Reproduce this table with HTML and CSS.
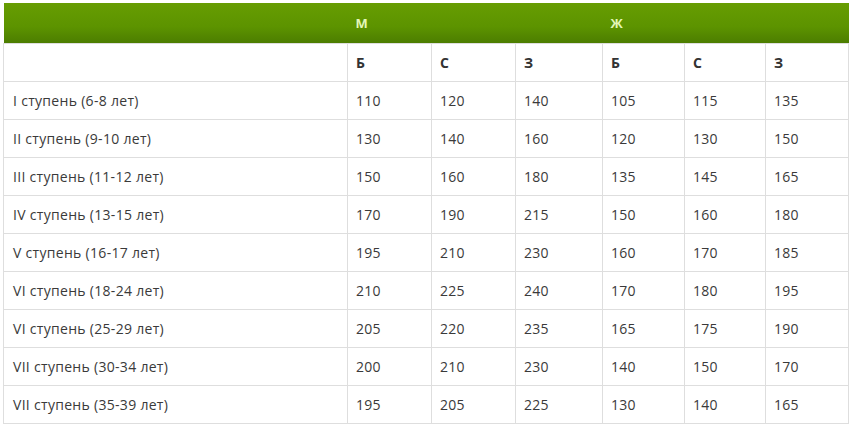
FILE: index.html
```html
<!DOCTYPE html>
<html lang="ru">
<head>
<meta charset="utf-8">
<link rel="stylesheet" href="styles.css">
</head>
<body>
<table class="norms">
  <colgroup>
    <col class="c-name"><col class="c1"><col class="c2"><col class="c3"><col class="c4"><col class="c5"><col class="c6">
  </colgroup>
  <thead>
    <tr class="top">
      <th></th>
      <th colspan="3">М</th>
      <th colspan="3">Ж</th>
    </tr>
  </thead>
  <tbody>
    <tr class="sub"><td></td><td>Б</td><td>С</td><td>З</td><td>Б</td><td>С</td><td>З</td></tr>
    <tr><td>I ступень (6-8 лет)</td><td>110</td><td>120</td><td>140</td><td>105</td><td>115</td><td>135</td></tr>
    <tr><td>II ступень (9-10 лет)</td><td>130</td><td>140</td><td>160</td><td>120</td><td>130</td><td>150</td></tr>
    <tr><td>III ступень (11-12 лет)</td><td>150</td><td>160</td><td>180</td><td>135</td><td>145</td><td>165</td></tr>
    <tr><td>IV ступень (13-15 лет)</td><td>170</td><td>190</td><td>215</td><td>150</td><td>160</td><td>180</td></tr>
    <tr><td>V ступень (16-17 лет)</td><td>195</td><td>210</td><td>230</td><td>160</td><td>170</td><td>185</td></tr>
    <tr><td>VI ступень (18-24 лет)</td><td>210</td><td>225</td><td>240</td><td>170</td><td>180</td><td>195</td></tr>
    <tr><td>VI ступень (25-29 лет)</td><td>205</td><td>220</td><td>235</td><td>165</td><td>175</td><td>190</td></tr>
    <tr><td>VII ступень (30-34 лет)</td><td>200</td><td>210</td><td>230</td><td>140</td><td>150</td><td>170</td></tr>
    <tr><td>VII ступень (35-39 лет)</td><td>195</td><td>205</td><td>225</td><td>130</td><td>140</td><td>165</td></tr>
  </tbody>
</table>
</body>
</html>
```
FILE: styles.css
```css
html, body {
  margin: 0;
  background: #fff;
}
body {
  padding: 3px;
  font-family: "Open Sans", "DejaVu Sans", sans-serif;
  font-size: 14px;
  color: #3a3a3a;
}
.norms {
  border-collapse: collapse;
  table-layout: fixed;
  width: 845px;
}
.c-name { width: 344px; }
.c1 { width: 84px; }
.c2 { width: 84px; }
.c3 { width: 87px; }
.c4 { width: 82px; }
.c5 { width: 81px; }
.c6 { width: 83px; }

.top th {
  height: 40px;
  box-sizing: border-box;
  padding: 0 8px;
  text-align: left;
  font-weight: 700;
  font-size: 13px;
  color: #e4f7b8;
  background: linear-gradient(to bottom, #679d02 0%, #5c9300 60%, #4c7d00 100%);
  border: none;
}
.norms td {
  height: 38px;
  box-sizing: border-box;
  padding: 0 8px;
  border: 1px solid #dedede;
  white-space: nowrap;
  letter-spacing: 0.3px;
}
.norms td:first-child {
  padding-left: 9px;
}
.sub td {
  font-weight: 700;
  color: #333;
  letter-spacing: 0;
}
```
